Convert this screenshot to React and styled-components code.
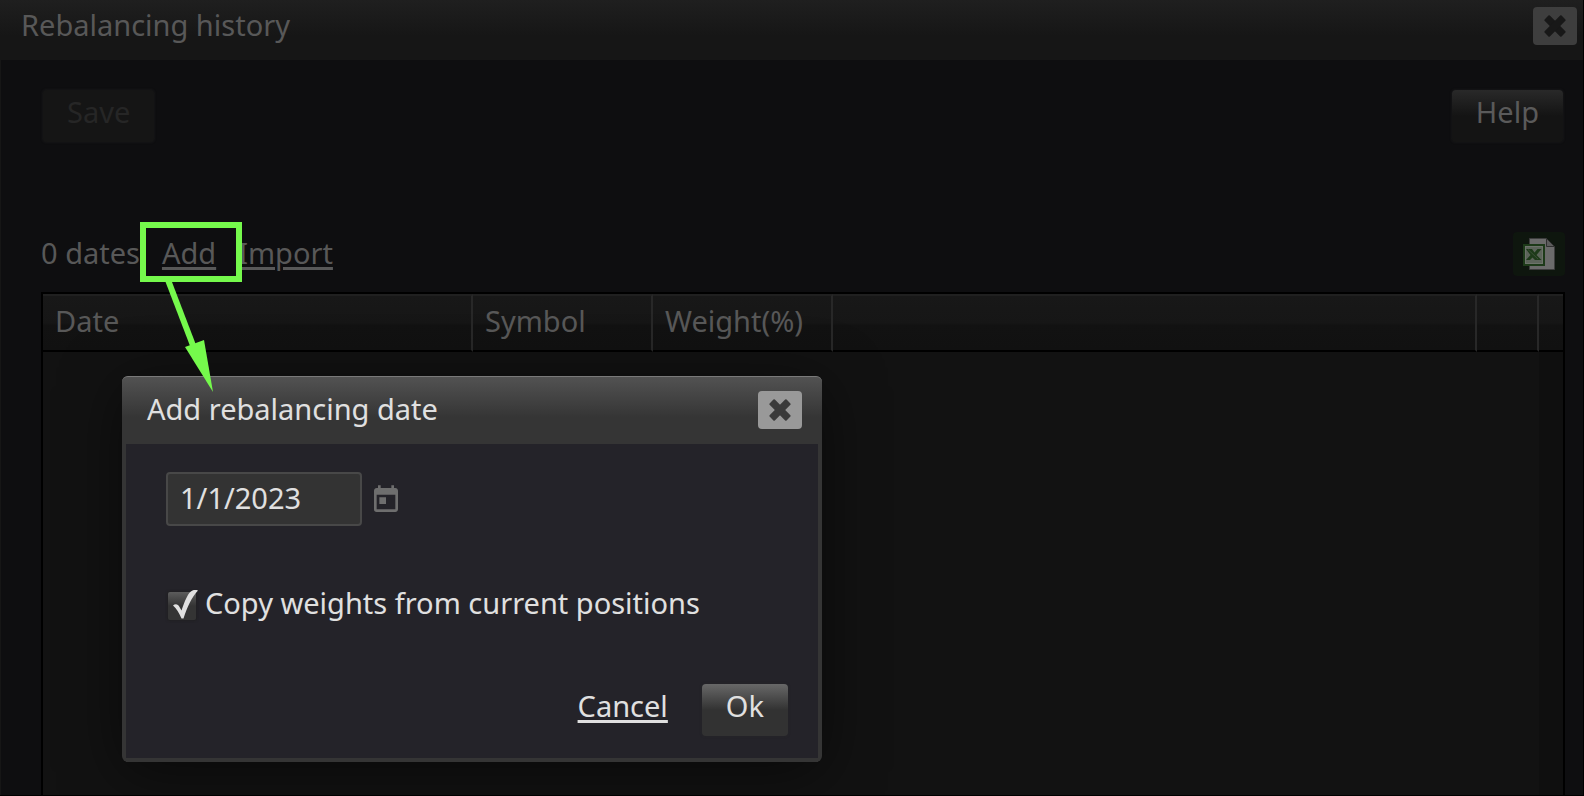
import React, { useState } from 'react';
import styled, { createGlobalStyle, css } from 'styled-components';
import { MdToday } from 'react-icons/md';

const CloseIcon = () => (
  <svg width="24" height="24" viewBox="-12 -12 24 24" aria-hidden="true">
    <g transform="rotate(45)" fill="currentColor">
      <rect x="-12" y="-3.7" width="24" height="7.4" rx="1" />
      <rect x="-3.7" y="-12" width="7.4" height="24" rx="1" />
    </g>
  </svg>
);

const ExcelIcon = () => (
  <svg width="32" height="32" viewBox="0 0 32 32" aria-hidden="true">
    <path d="M6.5 .5H23.5L31.5 8.5V31.5H6.5Z" fill="#6b6b6b" stroke="#3d3d3d" />
    <path d="M23.5 .5V8.5H31.5Z" fill="#5c5c5c" stroke="#303030" />
    <rect x="0" y="6" width="22" height="22" fill="#1d3a19" />
    <rect x="2.5" y="8.5" width="17" height="17" fill="#5c645a" stroke="#6c736a" strokeWidth="1" />
    <path d="M3 11H9L11.5 14.5L14.5 11H18.5L13.5 17L18.5 22H12L9.5 19.5L7 22H3L7.5 17Z" fill="#1d3a19" />
    <path d="M5 11.5L15 21" stroke="#3b5037" strokeWidth="1" />
  </svg>
);

const CheckMark = () => (
  <svg viewBox="0 0 32 32" aria-hidden="true">
    <path
      d="M6 15.5C8 13.5 11 13.5 12.5 17L14.5 20.5C17.5 12 21 2 25.5 .5C27.5 -.2 29.5 0 31 .5C24.500 7 20 18 16.500 28.500H14.500C12 23 9.500 18.500 6 15.500Z"
      fill="#e0e0e0"
    />
  </svg>
);

const Arrow = () => (
  <svg width="80" height="114" viewBox="0 0 80 114" aria-hidden="true">
    <path d="M28 -2L54 66" stroke="#75f94c" strokeWidth="6" />
    <path d="M45 65L64 58L73 110Z" fill="#75f94c" />
  </svg>
);

const App = () => {
  const [date, setDate] = useState('1/1/2023');
  const [copyWeights, setCopyWeights] = useState(true);

  return (
    <>
      <GlobalStyle />
      <Window>
        <TitleBar>
          <Title>Rebalancing history</Title>
          <CloseButton type="button" aria-label="Close window" $dim>
            <CloseIcon />
          </CloseButton>
        </TitleBar>

        <Content>
          <Toolbar>
            <Button type="button" $tone="disabled" disabled>Save</Button>
            <Button type="button" $tone="dim">Help</Button>
          </Toolbar>

          <Summary>
            <span>0 dates</span>
            <Highlighted>
              <TextLink href="#add">Add</TextLink>
              <Callout>
                <CalloutBox />
                <Arrow />
              </Callout>
            </Highlighted>
            <TextLink href="#import">Import</TextLink>
            <ExportButton type="button" aria-label="Export to Excel">
              <ExcelIcon />
            </ExportButton>
          </Summary>

          <TableFrame>
            <Table>
              <colgroup>
                <Col $width={430} />
                <Col $width={180} />
                <Col $width={180} />
                <col />
                <Col $width={62} />
                <Col $width={24} />
              </colgroup>
              <thead>
                <tr>
                  <th scope="col">Date</th>
                  <th scope="col">Symbol</th>
                  <th scope="col">Weight(%)</th>
                  <th />
                  <th />
                  <th />
                </tr>
              </thead>
              <tbody>
                <tr>
                  <td colSpan={5} />
                  <td />
                </tr>
              </tbody>
            </Table>
          </TableFrame>
        </Content>
      </Window>

      <Dialog role="dialog" aria-labelledby="dialog-title">
        <DialogHeader>
          <DialogTitle id="dialog-title">Add rebalancing date</DialogTitle>
          <CloseButton type="button" aria-label="Close dialog">
            <CloseIcon />
          </CloseButton>
        </DialogHeader>

        <DialogBody>
          <DateRow>
            <DateInput
              type="text"
              aria-label="Rebalancing date"
              value={date}
              onChange={(e) => setDate(e.target.value)}
            />
            <CalendarButton type="button" aria-label="Pick a date">
              <MdToday size={32} />
            </CalendarButton>
          </DateRow>

          <CheckRow>
            <CheckBox>
              <input
                type="checkbox"
                checked={copyWeights}
                onChange={(e) => setCopyWeights(e.target.checked)}
              />
              {copyWeights && <CheckMark />}
            </CheckBox>
            <span>Copy weights from current positions</span>
          </CheckRow>

          <Actions>
            <TextLink href="#cancel" $bright>Cancel</TextLink>
            <Button type="button" $tone="bright">Ok</Button>
          </Actions>
        </DialogBody>
      </Dialog>
    </>
  );
};

const GlobalStyle = createGlobalStyle`
  * {
    box-sizing: border-box;
  }

  body {
    margin: 0;
    background: #000;
    color: #585858;
    font-family: 'Noto Sans', 'Open Sans', sans-serif;
    font-size: 29px;
    line-height: 40px;
  }

  button, input {
    font: inherit;
  }
`;

const Window = styled.div`
  display: flex;
  flex-direction: column;
  min-height: 100vh;
  background: #0e0e10;
  border-right: 1px solid #000;
  border-bottom: 1px solid #000;
`;

const TitleBar = styled.header`
  display: flex;
  align-items: flex-start;
  justify-content: space-between;
  height: 60px;
  padding: 7px 6px 0 21px;
  background: linear-gradient(#1f1f1f, #161616 60%);
`;

const Title = styled.h1`
  margin: 0;
  font-size: 29px;
  font-weight: 400;
  line-height: 36px;
`;

const CloseButton = styled.button`
  display: flex;
  align-items: center;
  justify-content: center;
  width: 44px;
  height: 38px;
  padding: 0;
  border: none;
  border-radius: 4px;
  cursor: pointer;
  background: ${({ $dim }) => ($dim ? '#3e3e3e' : '#999')};
  color: ${({ $dim }) => ($dim ? '#181818' : '#3a3a3a')};
`;

const Content = styled.main`
  display: flex;
  flex: 1;
  flex-direction: column;
  padding: 30px 18px 0 40px;
  border-left: 1px solid #161616;
`;

const Toolbar = styled.div`
  display: flex;
  justify-content: space-between;
  margin-bottom: 90px;
  padding: 0 2px;
`;

const tones = {
  disabled: css`
    background: #151515;
    color: #262626;
  `,
  dim: css`
    background: linear-gradient(#292929, #141414 50%);
    color: #5a5a5a;
  `,
  bright: css`
    background: linear-gradient(#686868, #323232 50%);
    color: #e0e0e0;
  `,
};

const Button = styled.button`
  height: 52px;
  padding: 0 24px 8px;
  border: none;
  border-radius: 4px;
  box-shadow: 0 0 2px 1px rgba(40, 40, 40, 0.3);
  cursor: pointer;
  ${({ $tone }) => tones[$tone]}
`;

const TextLink = styled.a`
  color: ${({ $bright }) => ($bright ? '#e0e0e0' : 'inherit')};
  text-decoration-thickness: 3px;
  text-underline-offset: 3px;
`;

const Summary = styled.div`
  display: flex;
  align-items: flex-start;
  gap: 22px;
  height: 60px;
  line-height: 42px;
`;

const Highlighted = styled.span`
  position: relative;
`;

const Callout = styled.span`
  position: absolute;
  top: -10px;
  left: -22px;
  z-index: 2;
  pointer-events: none;

  svg {
    display: block;
  }
`;

const CalloutBox = styled.span`
  display: block;
  width: 102px;
  height: 60px;
  border: 6px solid #75f94c;
`;

const ExportButton = styled.button`
  display: flex;
  align-items: center;
  justify-content: center;
  width: 52px;
  height: 44px;
  margin-left: auto;
  padding: 0 0 1px;
  border: none;
  border-radius: 4px;
  background: #0e160e;
  cursor: pointer;
`;

const TableFrame = styled.div`
  flex: 1;
  display: grid;
  border: 2px solid #000;
  border-bottom: none;
  background: #121212;
`;

const Table = styled.table`
  width: 100%;
  height: 100%;
  table-layout: fixed;
  border-collapse: separate;
  border-spacing: 0;

  th {
    height: 58px;
    padding: 0 12px 4px;
    border-top: 2px solid #202020;
    border-right: 2px solid #282828;
    border-bottom: 2px solid #000;
    background: linear-gradient(#181818, #161616 50%, #121212 54%, #111);
    font-weight: 400;
    text-align: left;
  }

  th:last-child {
    border-right: none;
  }

  td {
    padding: 0;
  }

  td:last-child {
    background: #0f0f0f;
  }
`;

const Col = styled.col`
  width: ${({ $width }) => $width}px;
`;

const Dialog = styled.section`
  position: absolute;
  top: 376px;
  left: 122px;
  width: 700px;
  border-radius: 6px;
  background: #353535;
  box-shadow: 0 10px 60px rgba(0, 0, 0, 0.5);
  color: #e0e0e0;
`;

const DialogHeader = styled.header`
  display: flex;
  justify-content: space-between;
  height: 68px;
  padding: 14px 20px 0 25px;
  border-top: 1px solid #7a7a7a;
  border-radius: 6px 6px 0 0;
  background: linear-gradient(#525252, #353535 60%);
`;

const DialogTitle = styled.h2`
  margin: 0;
  font-size: 29px;
  font-weight: 400;
  line-height: 36px;
`;

const DialogBody = styled.div`
  margin: 0 4px;
  padding: 28px 30px 22px 40px;
  border-bottom: 4px solid #353535;
  background: #242329;
`;

const DateRow = styled.div`
  display: flex;
  align-items: center;
  gap: 8px;
`;

const DateInput = styled.input`
  width: 196px;
  height: 54px;
  padding: 0 12px 4px;
  border: 2px solid #484848;
  border-radius: 4px;
  outline: none;
  background: #333;
  color: #e0e0e0;
`;

const CalendarButton = styled.button`
  display: flex;
  padding: 2px 0 0;
  border: none;
  background: none;
  color: #6e6e6e;
  cursor: pointer;
`;

const CheckRow = styled.label`
  display: flex;
  align-items: flex-end;
  gap: 9px;
  height: 40px;
  margin: 58px 0 60px;
  padding-left: 2px;
  line-height: 42px;
`;

const CheckBox = styled.span`
  position: relative;
  display: flex;

  input {
    appearance: none;
    width: 28px;
    height: 28px;
    margin: 0 0 4px;
    border-radius: 2px;
    background: linear-gradient(#5c5c5c, #343434 50%);
    box-shadow: 0 0 2px 1px rgba(30, 30, 30, 0.6);
  }

  svg {
    position: absolute;
    top: -2px;
    left: -1px;
    width: 32px;
    height: 32px;
    pointer-events: none;
  }
`;

const Actions = styled.div`
  display: flex;
  align-items: flex-start;
  justify-content: flex-end;
  gap: 34px;
  line-height: 44px;
`;

export default App;
